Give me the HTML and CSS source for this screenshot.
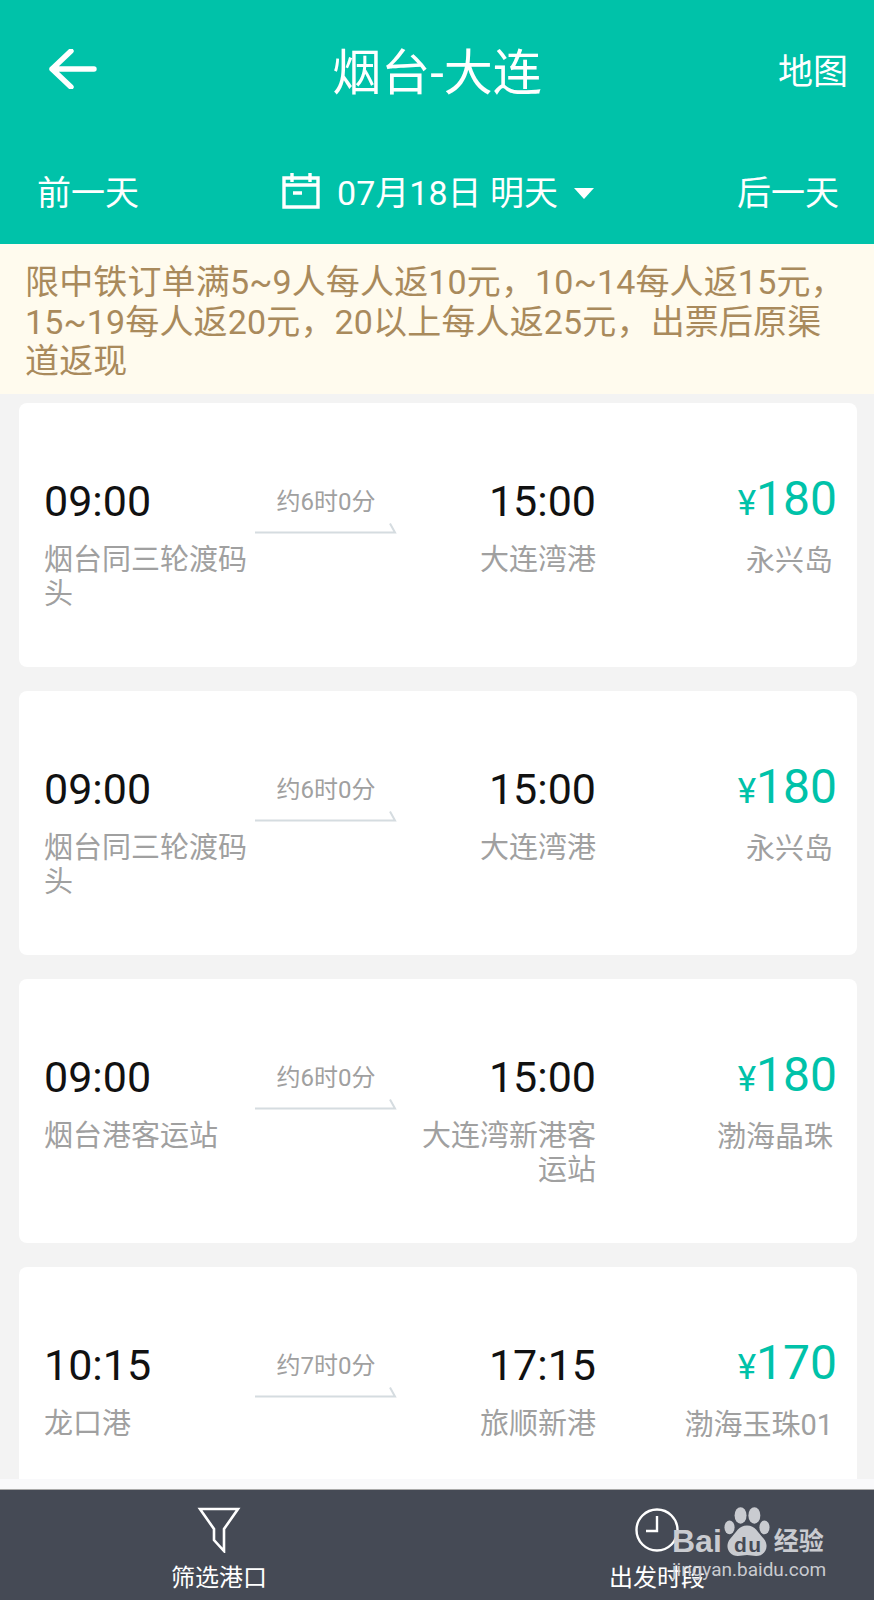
FILE: index.html
```html
<!DOCTYPE html>
<html lang="zh">
<head>
<meta charset="utf-8">
<title>烟台-大连</title>
<link rel="stylesheet" href="styles.css">
</head>
<body>
<div class="page">
  <header class="header">
    <div class="nav">
      <svg class="back" viewBox="0 0 48 40" width="48" height="40"><path d="M22 2 3 20l19 18M3 20h42" fill="none" stroke="#fff" stroke-width="5.4" stroke-linecap="round" stroke-linejoin="round"/></svg>
      <h1 class="title">烟台-大连</h1>
      <span class="map">地图</span>
    </div>
    <div class="dates">
      <span class="day">前一天</span>
      <div class="current">
        <svg class="cal" viewBox="0 0 38 36" width="38" height="36"><path d="M2 5h34v29H2zM2 12h34M10 0v9M28 0v9M11 20h9" fill="none" stroke="#fff" stroke-width="3.4"/></svg>
        <span>07月18日 明天</span>
        <i class="caret"></i>
      </div>
      <span class="day">后一天</span>
    </div>
  </header>
  <div class="notice">限中铁订单满5~9人每人返10元，10~14每人返15元，15~19每人返20元，20以上每人返25元，出票后原渠道返现</div>
  <main class="list">
    <article class="card">
      <div class="side"><div class="time">09:00</div><div class="place">烟台同三轮渡码头</div></div>
      <div class="mid"><div class="dur">约6时0分</div><svg class="line" viewBox="0 0 142 14" width="142" height="14"><path d="M0 12.5h140l-5-9" fill="none" stroke="#d5dce0" stroke-width="2"/></svg></div>
      <div class="side arrive"><div class="time">15:00</div><div class="place">大连湾港</div></div>
      <div class="fare"><div class="price"><small>¥</small>180</div><div class="ship">永兴岛</div></div>
    </article>
    <article class="card">
      <div class="side"><div class="time">09:00</div><div class="place">烟台同三轮渡码头</div></div>
      <div class="mid"><div class="dur">约6时0分</div><svg class="line" viewBox="0 0 142 14" width="142" height="14"><path d="M0 12.5h140l-5-9" fill="none" stroke="#d5dce0" stroke-width="2"/></svg></div>
      <div class="side arrive"><div class="time">15:00</div><div class="place">大连湾港</div></div>
      <div class="fare"><div class="price"><small>¥</small>180</div><div class="ship">永兴岛</div></div>
    </article>
    <article class="card">
      <div class="side"><div class="time">09:00</div><div class="place">烟台港客运站</div></div>
      <div class="mid"><div class="dur">约6时0分</div><svg class="line" viewBox="0 0 142 14" width="142" height="14"><path d="M0 12.5h140l-5-9" fill="none" stroke="#d5dce0" stroke-width="2"/></svg></div>
      <div class="side arrive"><div class="time">15:00</div><div class="place">大连湾新港客运站</div></div>
      <div class="fare"><div class="price"><small>¥</small>180</div><div class="ship">渤海晶珠</div></div>
    </article>
    <article class="card">
      <div class="side"><div class="time">10:15</div><div class="place">龙口港</div></div>
      <div class="mid"><div class="dur">约7时0分</div><svg class="line" viewBox="0 0 142 14" width="142" height="14"><path d="M0 12.5h140l-5-9" fill="none" stroke="#d5dce0" stroke-width="2"/></svg></div>
      <div class="side arrive"><div class="time">17:15</div><div class="place">旅顺新港</div></div>
      <div class="fare"><div class="price"><small>¥</small>170</div><div class="ship">渤海玉珠01</div></div>
    </article>
  </main>
  <footer class="tabs">
    <div class="tab">
      <svg viewBox="0 0 44 46" width="44" height="46"><path d="M3 2h38L27 22v22L17 33V22z" fill="none" stroke="#fff" stroke-width="2.6"/></svg>
      <span>筛选港口</span>
    </div>
    <div class="tab">
      <svg viewBox="0 0 44 46" width="44" height="46"><circle cx="22" cy="23" r="20.5" fill="none" stroke="#fff" stroke-width="2.4"/><path d="M22 9v15H11" fill="none" stroke="#fff" stroke-width="2.4"/></svg>
      <span>出发时段</span>
    </div>
  </footer>
  <div class="mark">
    <div class="mark-row">
      <span class="bai">Bai</span>
      <svg class="paw" viewBox="0 0 50 54" width="46" height="50"><g fill="#c9cbd0"><ellipse cx="18" cy="9" rx="6.5" ry="9"/><ellipse cx="33" cy="9" rx="6.5" ry="9"/><ellipse cx="6" cy="22" rx="5.5" ry="7.5"/><ellipse cx="44" cy="22" rx="5.5" ry="7.5"/><path d="M25 20c9 0 12 8 18 14 7 8 2 19-8 19-4 0-7-1-10-1s-6 1-10 1c-10 0-15-11-8-19 6-6 9-14 18-14z"/></g></svg>
      <span class="du">du</span>
      <span class="jy">经验</span>
    </div>
    <div class="url">jingyan.baidu.com</div>
  </div>
</div>
</body>
</html>
```
FILE: styles.css
```css
* { box-sizing: border-box; margin: 0; padding: 0; }
html, body { width: 874px; height: 1600px; overflow: hidden; }
body { font-family: Roboto, "Noto Sans CJK SC", sans-serif; background: #f3f3f3; }
.page { position: relative; width: 874px; height: 1600px; display: flex; flex-direction: column; }

.header { height: 244px; background: #00c2a9; color: #fff; display: flex; flex-direction: column; }
.nav { height: 144px; padding: 49px 26px 0 49px; display: flex; justify-content: space-between; align-items: flex-start; position: relative; }
.title { position: absolute; left: 0; right: 0; top: 39px; text-align: center; font-size: 49px; line-height: 70px; font-weight: 400; }
.back { display: block; }
.map { font-size: 35px; line-height: 48px; }
.dates { display: flex; justify-content: space-between; align-items: center; padding: 25px 35px 0 37px; font-size: 34px; line-height: 48px; }
.current { display: flex; align-items: center; font-size: 34px; }
.cal { margin-right: 17px; margin-top: -4px; }
.caret { width: 0; height: 0; margin-left: 16px; border-left: 10px solid transparent; border-right: 10px solid transparent; border-top: 11px solid #fff; }

.notice { height: 150px; background: #fffbee; color: #a98a5c; font-size: 34px; line-height: 39.7px; letter-spacing: .15px; padding: 19px 25px 0 25px; }

.list { flex: 1; padding: 9px 17px 0 19px; display: flex; flex-direction: column; gap: 24px; overflow: hidden; background: #f3f3f3; border-bottom: 10px solid #f9f9fb; }
.card { flex: none; height: 264px; background: #fff; border-radius: 8px; display: flex; padding: 69px 20px 0 25px; }
.side { width: 212px; flex: none; }
.time { font-size: 43px; line-height: 58px; color: #111; }
.place { font-size: 29px; line-height: 34px; color: #a0a0a0; margin-top: 13px; }
.mid { width: 142px; flex: none; margin-left: -1px; padding-top: 13px; text-align: center; }
.dur { font-size: 24px; line-height: 34px; color: #a0a0a0; }
.line { display: block; margin-top: 1px; }
.arrive { width: 175px; margin-left: 24px; text-align: right; }
.fare { flex: 1; text-align: right; }
.price { font-size: 48px; line-height: 54px; color: #00c2a9; }
.price small { font-size: 35px; }
.ship { font-size: 29px; line-height: 34px; color: #a0a0a0; margin-top: 13px; padding-right: 4px; }

.tabs { height: 111px; flex: none; background: #454a55; border-top: 1px solid #aaa; color: #fff; display: flex; justify-content: space-between; padding: 17px 169px 0 171px; }
.tab { display: flex; flex-direction: column; align-items: center; font-size: 24px; line-height: 34px; width: 96px; }
.tab span { margin-top: 8px; }

.mark { position: absolute; left: 672px; top: 1507px; color: #c9cbd0; }
.mark-row { display: flex; align-items: flex-end; height: 50px; position: relative; }
.bai { font-family: "Liberation Sans", sans-serif; font-weight: 700; font-size: 32px; line-height: 36px; margin-bottom: -2px; }
.paw { margin-left: 2px; }
.du { position: absolute; left: 62px; top: 27px; font-family: "Liberation Sans", sans-serif; font-weight: 700; font-size: 21px; line-height: 22px; letter-spacing: 1.5px; color: #454a55; }
.jy { font-size: 25px; line-height: 30px; margin-left: 4px; font-weight: 700; }
.url { font-size: 19px; line-height: 24px; margin-top: 1px; white-space: nowrap; }
```
